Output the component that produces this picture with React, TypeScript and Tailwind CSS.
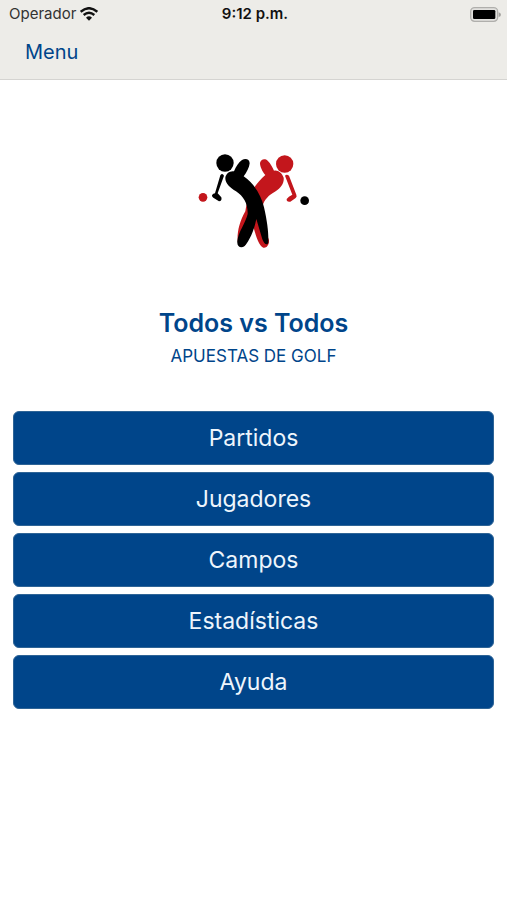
const sections = ["Partidos", "Jugadores", "Campos", "Estadísticas", "Ayuda"];

function WifiIcon() {
  return (
    <svg viewBox="0 0 54 42" className="h-[14px] w-[18px]" role="img" aria-label="Wi-Fi">
      <g fill="none" stroke="#111" strokeWidth="7">
        <path d="M2 14.500Q27 -7.500 52 14.500" />
        <path d="M11 24Q27 10 43 24" />
      </g>
      <path d="M18 32Q27 24 36 32L27 41Z" fill="#111" />
    </svg>
  );
}

function BatteryIcon() {
  return (
    <svg viewBox="0 0 93 45" className="h-[15px] w-[31px]" role="img" aria-label="Batería">
      <rect x="2" y="2" width="81" height="41" rx="12" fill="#e2e1de" stroke="#b0afac" strokeWidth="4" />
      <rect x="9" y="9" width="67" height="27" rx="4" fill="#000" />
      <path d="M86 16Q93 18 93 23Q93 28 86 30Z" fill="#a3a29f" />
    </svg>
  );
}

function Logo() {
  return (
    <svg viewBox="0 0 384 330" className="h-[110px] w-[128px]" role="img" aria-label="Todos vs Todos">
      <g fill="#c3161c">
        <circle cx="284" cy="57" r="26" />
        <circle cx="39" cy="157" r="13" />
        <path d="M226 90C217 80 210 65 210 54C212 42 225 39 233 47C242 56 248 67 252 77C264 74 276 84 281 98C283 115 273 129 257 139C237 150 222 164 218 184L212 220L237 285C238 301 229 310 220 308C206 303 195 266 189 239L166 300C156 309 145 302 143 289C141 263 148 230 166 199C173 150 193 120 226 90Z" />
        <path d="M285 92Q290 87 297 92L319 149Q322 155 316 160L301 170Q289 172 290 162Q295 154 307 149Z" />
      </g>
      <g fill="#000">
        <circle cx="105" cy="54" r="26" />
        <circle cx="344" cy="167" r="13" />
        <path d="M132 79C138 65 146 51 156 45C167 39 179 43 179 55C178 68 170 82 161 94C193 117 213 149 222 187C232 230 236 265 235 294C230 303 222 296 217 283L199 222C193 255 178 287 164 303C153 312 140 305 142 288C145 261 168 231 173 207C174 177 161 154 138 139C120 128 105 114 106 98C108 86 119 77 132 79Z" />
        <path d="M91 91Q97 83 102 92L83 145L94 157Q97 168 87 169L70 158Q62 151 70 146L75 145Z" />
      </g>
    </svg>
  );
}

export default function App() {
  return (
    <div className="min-h-screen bg-white font-['Inter','Liberation_Sans',sans-serif] text-[#00458a]">
      <header className="border-b border-[#d5d4d1] bg-[#edece8]">
        <div className="grid h-7 grid-cols-3 items-center pr-1.5 pl-[9px] text-[15px] text-[#111]">
          <div className="flex items-center gap-1 text-[#333]">
            <span>Operador</span>
            <WifiIcon />
          </div>
          <time className="text-center font-semibold">9:12 p.m.</time>
          <div className="flex justify-end">
            <BatteryIcon />
          </div>
        </div>
        <nav className="flex h-[51px] items-center px-[25px]">
          <button type="button" className="pb-1 text-xl">Menu</button>
        </nav>
      </header>
      <main className="px-[13px] pt-[65px] pb-8">
        <div className="flex flex-col items-center text-center">
          <Logo />
          <h1 className="mt-[52px] text-[25px] leading-8 font-semibold">Todos vs Todos</h1>
          <p className="mt-[5px] text-[17px] leading-6">APUESTAS DE GOLF</p>
        </div>
        <div className="mt-[43px] flex flex-col gap-[7px]">
          {sections.map((name) => (
            <button key={name} type="button" className="h-[54px] rounded-md border border-[#2e6496] bg-[#00458a] text-[23px] text-[#eef5fc]">
              {name}
            </button>
          ))}
        </div>
      </main>
    </div>
  );
}
